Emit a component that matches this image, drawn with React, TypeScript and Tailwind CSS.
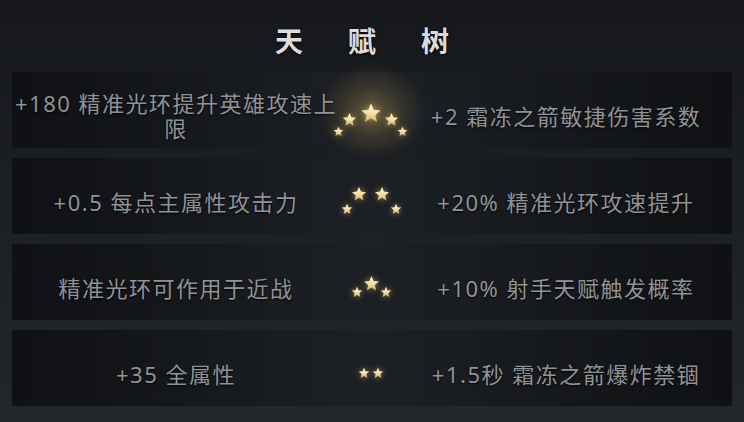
import React from "react";

type StarDef = { cls: string };

const Star = ({ cls }: StarDef) => (
  <svg
    viewBox="0 0 24 24"
    className={`absolute ${cls} drop-shadow-[0_0_3px_rgba(255,215,120,0.55)]`}
  >
    <defs>
      <linearGradient id="sg" x1="0" y1="0" x2="0" y2="1">
        <stop offset="0%" stopColor="#fff8da" />
        <stop offset="60%" stopColor="#efdca0" />
        <stop offset="100%" stopColor="#c9ab62" />
      </linearGradient>
    </defs>
    <polygon
      points="12,1.5 15,8.4 22.5,9.2 16.8,14.2 18.6,21.8 12,17.8 5.4,21.8 7.2,14.2 1.5,9.2 9,8.4"
      fill="url(#sg)"
    />
  </svg>
);

type Row = {
  left: string;
  right: string;
  stars: string[];
  glow?: boolean;
};

const rows: Row[] = [
  {
    left: "+180 精准光环提升英雄攻速上限",
    right: "+2 霜冻之箭敏捷伤害系数",
    glow: true,
    stars: [
      "left-[20px] top-[30px] w-[22px] h-[22px]",
      "left-[2px] top-[40px] w-[15px] h-[15px]",
      "left-[44px] top-[40px] w-[15px] h-[15px]",
      "left-[-7px] top-[54px] w-[11px] h-[11px]",
      "left-[57px] top-[54px] w-[11px] h-[11px]",
    ],
  },
  {
    left: "+0.5 每点主属性攻击力",
    right: "+20% 精准光环攻速提升",
    stars: [
      "left-[11px] top-[28px] w-[16px] h-[16px]",
      "left-[34px] top-[28px] w-[16px] h-[16px]",
      "left-[1px] top-[45px] w-[12px] h-[12px]",
      "left-[50px] top-[45px] w-[12px] h-[12px]",
    ],
  },
  {
    left: "精准光环可作用于近战",
    right: "+10% 射手天赋触发概率",
    stars: [
      "left-[23px] top-[31px] w-[17px] h-[17px]",
      "left-[11px] top-[42px] w-[12px] h-[12px]",
      "left-[40px] top-[42px] w-[12px] h-[12px]",
    ],
  },
  {
    left: "+35 全属性",
    right: "+1.5秒 霜冻之箭爆炸禁锢",
    stars: [
      "left-[18px] top-[37px] w-[12px] h-[12px]",
      "left-[32px] top-[37px] w-[12px] h-[12px]",
    ],
  },
];

const textCls =
  "text-[22px] leading-[25px] tracking-[1.5px] text-[#909396] text-center [text-shadow:0_1px_2px_rgba(0,0,0,0.9)]";

export default function App() {
  return (
    <div
      className="w-[744px] h-[422px] overflow-hidden bg-gradient-to-b from-[#16181c] to-[#23272c]"
      style={{ fontFamily: '"Noto Sans", "Noto Sans CJK SC", sans-serif' }}
    >
      <div className="h-[72px] flex items-center justify-center pt-[10px] pr-[20px] gap-[45px]">
        {["天", "赋", "树"].map((c) => (
          <span
            key={c}
            className="text-[28px] font-bold text-[#dcdcdc] leading-none [text-shadow:0_1px_3px_rgba(0,0,0,0.9)]"
          >
            {c}
          </span>
        ))}
      </div>
      <div className="flex flex-col gap-[10px] px-[12px]">
        {rows.map((r, i) => (
          <div
            key={i}
            className="h-[76px] grid grid-cols-[328px_64px_328px] bg-gradient-to-r from-[#0f1114] via-[#1d2025] to-[#0f1114]"
          >
            <div className="flex items-center justify-center pt-[12px]">
              <div className={textCls}>{r.left}</div>
            </div>
            <div className="relative">
              {r.glow && (
                <div className="absolute left-[-22px] top-[-8px] w-[108px] h-[96px] rounded-full bg-[radial-gradient(closest-side,rgba(200,170,90,0.42)_0%,rgba(170,145,80,0.18)_55%,rgba(150,130,80,0)_100%)]" />
              )}
              {r.stars.map((s, j) => (
                <Star key={j} cls={s} />
              ))}
            </div>
            <div className="flex items-center justify-center pt-[12px] pr-[4px]">
              <div className={textCls}>{r.right}</div>
            </div>
          </div>
        ))}
      </div>
    </div>
  );
}
